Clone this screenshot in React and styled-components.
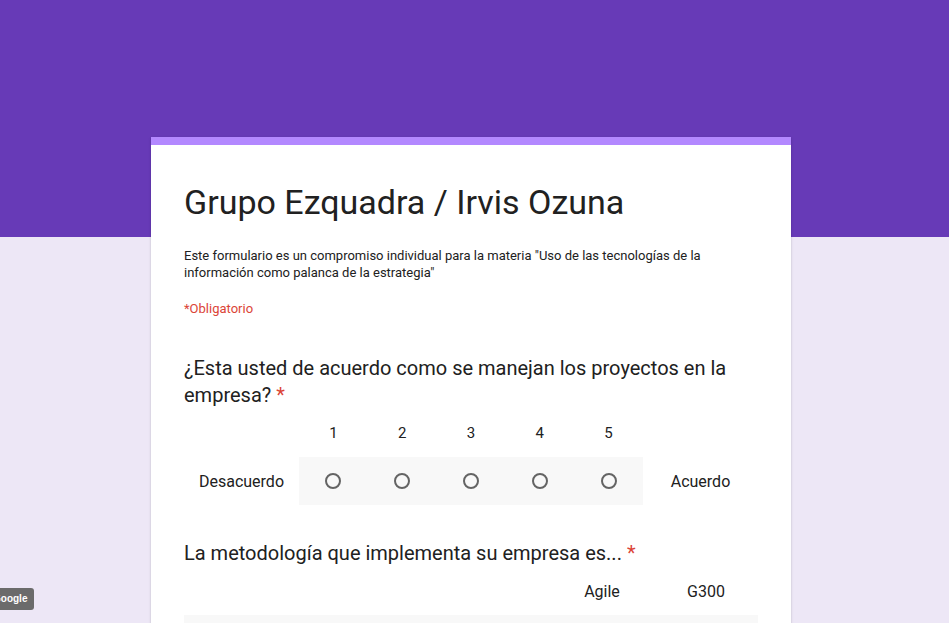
import React from "react";
import styled, { createGlobalStyle } from "styled-components";

const GlobalStyle = createGlobalStyle`
  html, body { margin: 0; padding: 0; overflow: hidden; }
  body { font-family: Roboto, "Liberation Sans", Arial, sans-serif; color: #202124; }
`;

const Page = styled.div`
  min-height: 100vh;
  background: linear-gradient(#673ab7 0, #673ab7 237px, #ede7f6 237px);
  padding-top: 137px;
  box-sizing: border-box;
`;

const Card = styled.div`
  width: 640px;
  box-sizing: border-box;
  margin-left: calc(50% - 323.5px);
  background: #fff;
  border-top: 8px solid #b388ff;
  padding: 37px 33px 40px 33px;
  box-shadow: 0 2px 1px -1px rgba(0,0,0,.2), 0 1px 1px 0 rgba(0,0,0,.14), 0 1px 3px 0 rgba(0,0,0,.12);
`;

const Title = styled.h1`
  margin: 0 0 25px;
  font-size: 34px;
  line-height: 40px;
  font-weight: 400;
  color: #212121;
`;

const Description = styled.p`
  margin: 0;
  font-size: 13px;
  line-height: 17px;
  color: #212121;
`;

const Required = styled.div`
  margin-top: 19px;
  font-size: 13px;
  line-height: 17px;
  color: #db4437;
`;

const Question = styled.section`
  margin-top: ${(p) => p.$gap}px;
`;

const QuestionTitle = styled.div`
  font-size: 20px;
  line-height: 27px;
  color: #212121;
`;

const Star = styled.span`
  color: #db4437;
`;

const ScaleGrid = styled.div`
  display: grid;
  grid-template-columns: 115px repeat(5, 68.8px) 1fr;
  grid-auto-rows: 48px;
`;

const Cell = styled.div`
  display: flex;
  align-items: center;
  justify-content: center;
  font-size: ${(p) => (p.$small ? 15 : 16)}px;
  color: #212121;
  background: ${(p) => (p.$shaded ? "#f8f8f8" : "transparent")};
`;

const Radio = styled.span`
  width: 16px;
  height: 16px;
  box-sizing: border-box;
  border: 2px solid #646464;
  border-radius: 50%;
`;

const ChoiceGrid = styled.div`
  display: grid;
  grid-template-columns: 1fr 104px 104px;
  grid-auto-rows: 48px;
`;

const RowLabel = styled(Cell)`
  justify-content: flex-start;
  padding-left: 16px;
`;

const Badge = styled.div`
  position: fixed;
  left: -14px;
  top: 588px;
  height: 22px;
  line-height: 22px;
  padding: 0 7px;
  border-radius: 3px;
  background: #6b6b6b;
  color: #fff;
  font-family: "Liberation Sans", Arial, sans-serif;
  font-weight: 700;
  font-size: 10px;
`;

export default function App() {
  const scale = [1, 2, 3, 4, 5];
  return (
    <>
      <GlobalStyle />
      <Page>
        <Card>
          <Title>Grupo Ezquadra / Irvis Ozuna</Title>
          <Description>
            Este formulario es un compromiso individual para la materia "Uso de las tecnologías de la información como palanca de la estrategia"
          </Description>
          <Required>*Obligatorio</Required>

          <Question $gap={38}>
            <QuestionTitle>
              ¿Esta usted de acuerdo como se manejan los proyectos en la empresa? <Star>*</Star>
            </QuestionTitle>
            <ScaleGrid>
              <Cell />
              {scale.map((n) => (
                <Cell key={n} $small>{n}</Cell>
              ))}
              <Cell />
              <Cell>Desacuerdo</Cell>
              {scale.map((n) => (
                <Cell key={n} $shaded>
                  <Radio />
                </Cell>
              ))}
              <Cell>Acuerdo</Cell>
            </ScaleGrid>
          </Question>

          <Question $gap={35}>
            <QuestionTitle>
              La metodología que implementa su empresa es... <Star>*</Star>
            </QuestionTitle>
            <ChoiceGrid>
              <Cell />
              <Cell>Agile</Cell>
              <Cell>G300</Cell>
              <RowLabel $shaded>Proyectos</RowLabel>
              <Cell $shaded><Radio /></Cell>
              <Cell $shaded><Radio /></Cell>
            </ChoiceGrid>
          </Question>
        </Card>
      </Page>
      <Badge>Google</Badge>
    </>
  );
}
